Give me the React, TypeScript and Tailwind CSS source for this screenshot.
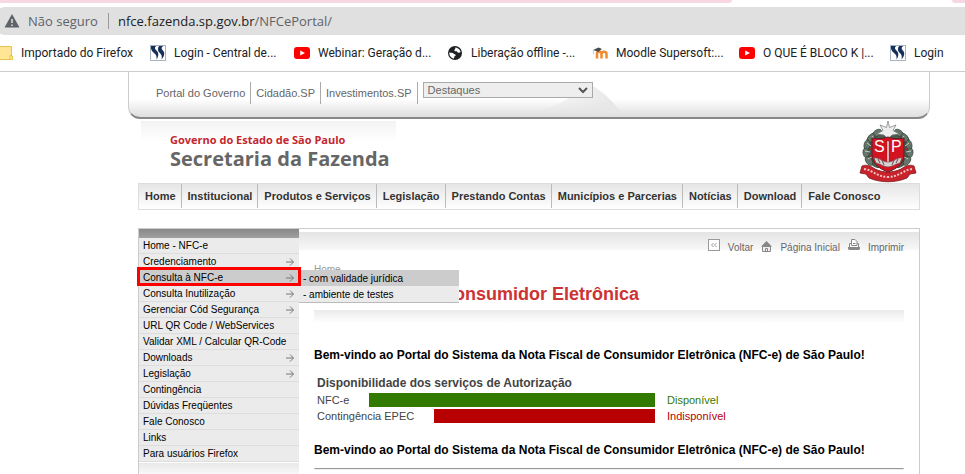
import type { ReactNode } from 'react';

type Bookmark = { label: string; icon: ReactNode; width: string };
type MenuItem = { label: string; submenu?: boolean; active?: boolean };

const MENU: MenuItem[] = [
  { label: 'Home - NFC-e' },
  { label: 'Credenciamento', submenu: true },
  { label: 'Consulta à NFC-e', submenu: true, active: true },
  { label: 'Consulta Inutilização', submenu: true },
  { label: 'Gerenciar Cód Segurança', submenu: true },
  { label: 'URL QR Code / WebServices' },
  { label: 'Validar XML / Calcular QR-Code' },
  { label: 'Downloads', submenu: true },
  { label: 'Legislação', submenu: true },
  { label: 'Contingência' },
  { label: 'Dúvidas Freqüentes' },
  { label: 'Fale Conosco' },
  { label: 'Links' },
  { label: 'Para usuários Firefox' },
];

const NAV = [
  'Home',
  'Institucional',
  'Produtos e Serviços',
  'Legislação',
  'Prestando Contas',
  'Municípios e Parcerias',
  'Notícias',
  'Download',
  'Fale Conosco',
];

const SERVICES = [
  { name: 'NFC-e', status: 'Disponível', bar: 'bg-[#337a00]', text: 'text-[#337a00]' },
  { name: 'Contingência EPEC', status: 'Indisponível', bar: 'bg-[#b80000]', text: 'text-[#b80000]' },
];

const WELCOME = 'Bem-vindo ao Portal do Sistema da Nota Fiscal de Consumidor Eletrônica (NFC-e) de São Paulo!';

function FolderIcon() {
  return (
    <svg width="16" height="16" viewBox="0 0 16 16">
      <path d="M0 1.500h14.500v9.500h1v3.500H0z" fill="#ffe694" stroke="#e8c34a" />
      <path d="M13 14v-3.500h2" fill="none" stroke="#e8c34a" />
    </svg>
  );
}

function SupersoftIcon() {
  return (
    <svg width="16" height="16" viewBox="0 0 16 16">
      <rect x=".5" y=".5" width="15" height="15" fill="#fff" stroke="#a9b4c2" />
      <path d="M1 1h5.500C4.500 2 4.500 3.500 6 5c2.500 2.300 3.500 5 .5 9.500.5-3.500-.5-5-2.500-6.500C1.500 6.200.5 3.500 1 1z" fill="#16305a" />
      <path d="M9 1h4.500c-2 1-2.500 2.500-1 4 2.500 2.300 2.500 5.500-1 9.500.8-3.500 0-5-1.700-6.500C7.500 6 7.500 3.500 9 1z" fill="#16305a" />
    </svg>
  );
}

function YoutubeIcon() {
  return (
    <svg width="16" height="16" viewBox="0 0 16 16">
      <rect y="2" width="16" height="12" rx="3" fill="#f00" />
      <path d="M6.200 5.500 11 8l-4.800 2.500z" fill="#fff" />
    </svg>
  );
}

function GlobeIcon() {
  return (
    <svg width="16" height="16" viewBox="0 0 16 16">
      <circle cx="8" cy="8" r="7" fill="#202124" />
      <path d="M8.500 2.500c2.500.2 4.600 2 5.100 4.500-1 .6-1.400 1-2.600.7-.8-.3-.5-1.200-1.500-1.400-1-.1-1.900.1-2.100-.8-.2-1 .8-1 .9-1.700.1-.6-.3-.7.200-1.300z" fill="#fff" />
      <path d="M2.300 7.500c1 .3 3.700 0 4.200 1 .4.900 2.200.4 2.200 1.400 0 1.200-1.400 1-1.500 2.100-.1.700.2 1-.4 1.500-2.700-.5-4.700-2.800-4.500-6z" fill="#fff" />
    </svg>
  );
}

function MoodleIcon() {
  return (
    <svg width="16" height="16" viewBox="0 0 16 16">
      <path d="M5 13.500V9c0-3 4.500-3 4.500 0v4.500M9.500 9c0-3 5-3 5 0v4.500" fill="none" stroke="#f28a2e" strokeWidth="2.500" />
      <path d="M1 5 6.500 2.500 10 4 6 7 4 6z" fill="#4a4a4a" />
      <path d="M1.500 5v4" stroke="#dcc8b8" />
    </svg>
  );
}

function MenuArrow() {
  return (
    <svg width="8" height="8" viewBox="0 0 8 8" fill="none" stroke="#777">
      <path d="M0 4h7.500M4 .5 7.500 4 4 7.500" />
    </svg>
  );
}

function BackIcon() {
  return (
    <svg width="12" height="12" viewBox="0 0 12 12" fill="none" stroke="#999">
      <rect x=".5" y=".5" width="11" height="11" fill="#fff" />
      <path d="M5.500 4l-2 2 2 2M8.500 4l-2 2 2 2" />
    </svg>
  );
}

function HouseIcon() {
  return (
    <svg width="11" height="11" viewBox="0 0 11 11">
      <path d="M5.500 0 11 5.500H0z" fill="#888" />
      <path d="M1.500 5.500h8v5h-8z" fill="#eee" stroke="#888" />
      <path d="M4.500 10.500V7.500h2v3M3 5.500h5" fill="none" stroke="#888" />
    </svg>
  );
}

function PrinterIcon() {
  return (
    <svg width="12" height="12" viewBox="0 0 12 12">
      <path d="M1.500 4.500h9v4h-9z" fill="#fff" stroke="#888" />
      <path d="M3.500 6.500v-6h3.500l2 2v4z" fill="#fff" stroke="#888" />
      <path d="M5 4.500h2.500" stroke="#888" />
      <path d="M0 8h12v2l-1 1H1L0 10z" fill="#888" />
    </svg>
  );
}

function CoatOfArms() {
  return (
    <svg width="58" height="62" viewBox="0 0 58 62" role="img" aria-label="Brasão de São Paulo">
      <path d="M20 10C10 11 5 20 6 29c0 9 4 15 12 18h22c8-3 12-9 12-18 1-9-4-18-14-19z" fill="#4b5c50" />
      <g fill="#66766a" stroke="#29382e" strokeWidth=".6">
        <ellipse cx="18" cy="12" rx="5" ry="3" transform="rotate(-35 18 12)" />
        <ellipse cx="12" cy="17" rx="5" ry="3" transform="rotate(-55 12 17)" />
        <ellipse cx="8" cy="24" rx="5" ry="3" transform="rotate(-80 8 24)" />
        <ellipse cx="7" cy="32" rx="5" ry="3" transform="rotate(80 7 32)" />
        <ellipse cx="10" cy="40" rx="5" ry="3" transform="rotate(55 10 40)" />
        <ellipse cx="40" cy="12" rx="5" ry="3" transform="rotate(35 40 12)" />
        <ellipse cx="46" cy="17" rx="5" ry="3" transform="rotate(55 46 17)" />
        <ellipse cx="50" cy="24" rx="5" ry="3" transform="rotate(80 50 24)" />
        <ellipse cx="51" cy="32" rx="5" ry="3" transform="rotate(-80 51 32)" />
        <ellipse cx="48" cy="40" rx="5" ry="3" transform="rotate(-55 48 40)" />
      </g>
      <path d="M8 22l4 3M6 30l5 1M9 38l4-2M13 15l3 4M50 22l-4 3M52 30l-5 1M49 38l-4-2M45 15l-3 4" stroke="#c3ccc5" />
      <g fill="#b3202a">
        <circle cx="11" cy="28" r="1" />
        <circle cx="12" cy="35" r="1" />
        <circle cx="47" cy="28" r="1" />
        <circle cx="46" cy="35" r="1" />
      </g>
      <path d="m29 0 1.500 6.500L37 4l-3 5.500 6 3.500-7 1-4 4-4-4-7-1 6-3.500L21 4l6.500 2.500z" fill="#ededed" stroke="#777" strokeWidth=".7" />
      <path d="M13 17c6 1 10 1 16-1 6 2 10 2 16 1v17c0 9-8 14-16 17-8-3-16-8-16-17z" fill="#d3131f" stroke="#59222a" />
      <path d="M28 20h2v24h-2z" fill="#f0dada" stroke="#8e1018" strokeWidth=".4" />
      <path d="M15 37c5-1 8 4 14 4s9-5 14-4l-2 5c-5 1-8 4-12 4s-7-3-12-4z" fill="#d8d2d2" stroke="#6b4a4c" strokeWidth=".7" />
      <path d="m19 38 2 4m2-3 2 5m8 0 2-5m2 3 2-4" stroke="#6b4a4c" />
      <text x="15" y="31" fontFamily="Liberation Sans, sans-serif" fontSize="16" fill="#fff">S</text>
      <text x="32" y="31" fontFamily="Liberation Sans, sans-serif" fontSize="16" fill="#fff">P</text>
      <path d="M3 45c4-2 9 0 13 3 8 4 18 4 26 0 4-3 9-5 13-3l2 7-6 1-3 4c-12 5-26 5-38 0l-3-4-6-1z" fill="#c9222b" stroke="#7a1a20" strokeWidth=".8" />
      <path d="M5 48c9 1 13 8 24 8s15-7 24-8" fill="none" stroke="#edc4c4" strokeWidth="2" strokeDasharray="2 1.500" />
    </svg>
  );
}

const BOOKMARKS: Bookmark[] = [
  { label: 'Importado do Firefox', icon: <FolderIcon />, width: 'w-[153px]' },
  { label: 'Login - Central de...', icon: <SupersoftIcon />, width: 'w-36' },
  { label: 'Webinar: Geração d...', icon: <YoutubeIcon />, width: 'w-[153px]' },
  { label: 'Liberação offline -...', icon: <GlobeIcon />, width: 'w-[145px]' },
  { label: 'Moodle Supersoft:...', icon: <MoodleIcon />, width: 'w-[147px]' },
  { label: 'O QUE É BLOCO K |...', icon: <YoutubeIcon />, width: 'w-[151px]' },
  { label: 'Login', icon: <SupersoftIcon />, width: 'w-20' },
];

function BrowserChrome() {
  return (
    <header>
      <div className="flex h-[3px] justify-between">
        <div className="w-[732px] rounded-br-lg bg-[#f8d7e5]" />
        <div className="w-[13px] rounded-bl-lg bg-[#f8d7e5]" />
      </div>
      <div className="-ml-2 mt-1 flex h-7 items-center rounded-l-full bg-[#e0e0e0] pl-3 font-['Open_Sans',sans-serif] text-[13px] text-[#5f6368]">
        <svg width="16" height="14" viewBox="0 0 16 14">
          <path d="M8 0l7.500 13.500H.5z" fill="#5f6368" />
          <path d="M8 5v4M8 10.500V12" stroke="#e0e0e0" strokeWidth="1.500" />
        </svg>
        <span className="ml-2 w-20 pt-px">Não seguro</span>
        <span className="mr-[9px] h-4 w-px bg-[#9a9a9a]" />
        <span className="pt-px">
          <span className="text-[#202124]">nfce.fazenda.sp.gov.br</span>/NFCePortal/
        </span>
      </div>
      <nav className="-ml-[3px] flex h-[37px] items-center overflow-hidden border-b border-[#ccc] font-[Roboto,sans-serif] text-[12px] text-[#202124]">
        {BOOKMARKS.map((b, i) => (
          <a key={i} href="#" className={`flex shrink-0 items-center gap-2 whitespace-nowrap ${b.width}`}>
            <span className="shrink-0">{b.icon}</span>
            {b.label}
          </a>
        ))}
      </nav>
    </header>
  );
}

function GovernmentBar() {
  return (
    <div className="relative h-[47px] overflow-hidden rounded-b-xl border-x border-b-2 border-x-[#ccc] border-b-[#888] bg-linear-to-b from-white from-60% to-[#dedede]">
      <svg className="absolute left-[390px] top-2 h-[34px] w-[105px]" viewBox="0 0 105 34">
        <defs>
          <linearGradient id="swoosh">
            <stop offset="0" stopColor="#e4e4e4" stopOpacity="0" />
            <stop offset="1" stopColor="#e6e6e6" />
          </linearGradient>
        </defs>
        <path d="M0 34C40 30 55 14 68 3Q88 12 103 34z" fill="url(#swoosh)" />
      </svg>
      <div className="relative flex items-start pl-[22px] pt-[10px] text-[11px] text-[#666]">
        {['Portal do Governo', 'Cidadão.SP', 'Investimentos.SP'].map((label) => (
          <a key={label} href="#" className="border-r border-[#aaa] px-[5px] leading-[22px]">
            {label}
          </a>
        ))}
        <select
          aria-label="Destaques"
          className="ml-[5px] h-4 w-[170px] appearance-none border border-[#aaa] bg-[#eee] px-1 text-[11px] leading-[14px] text-[#666]"
        >
          <option>Destaques</option>
        </select>
        <svg className="pointer-events-none -ml-[15px] mt-1 h-2 w-[10px]" viewBox="0 0 10 8" fill="none" stroke="#555" strokeWidth="2">
          <path d="m1 2 4 4 4-4" />
        </svg>
      </div>
    </div>
  );
}

function Brand() {
  return (
    <div className="ml-[13px] mr-[13px] mt-0.5 flex h-16 justify-between">
      <div className="h-5 w-[255px] bg-linear-to-b from-[#f3f3f3] to-white pl-[29px] pt-3 font-['Open_Sans',sans-serif] font-bold">
        <p className="whitespace-nowrap text-[11px] leading-[14px] text-[#c4262e]">Governo do Estado de São Paulo</p>
        <p className="whitespace-nowrap text-[20px] leading-6 text-[#666]">Secretaria da Fazenda</p>
      </div>
      <CoatOfArms />
    </div>
  );
}

function MainNav() {
  return (
    <nav className="mx-[10px] -mt-0.5 flex h-[27px] items-start border border-[#ddd] bg-linear-to-b from-[#e6e6e6] to-white text-[11px] font-bold text-[#333]">
      {NAV.map((label) => (
        <a key={label} href="#" className="border-r border-[#bbb] pl-[6px] pr-[5px] leading-6 whitespace-nowrap last:border-r-0">
          {label}
        </a>
      ))}
    </nav>
  );
}

function SideMenu() {
  return (
    <aside className="flex w-40 shrink-0 flex-col text-[10px] text-black">
      <div className="h-[9px] bg-linear-to-b from-[#888] to-[#a0a0a0]" />
      <ul className="border-b border-white">
        {MENU.map((item) => (
          <li key={item.label} className="relative">
            <a
              href="#"
              className={`flex h-4 items-center justify-between border-b border-[#ddd] pl-1 pr-[5px] whitespace-nowrap ${
                item.active ? 'bg-[#ccc]' : 'bg-[#ebebeb]'
              }`}
            >
              {item.label}
              {item.submenu && <MenuArrow />}
            </a>
            {item.active && (
              <>
                <span className="pointer-events-none absolute -inset-x-0.5 -top-[3px] bottom-0 z-20 border-[3px] border-[#f00]" />
                <ul className="absolute left-full top-0 z-10 w-40 border-b border-[#bbb] bg-[#ebebeb]">
                  <li>
                    <a href="#" className="flex h-4 items-center bg-[#ccc] pl-1">- com validade jurídica</a>
                  </li>
                  <li>
                    <a href="#" className="flex h-4 items-center pl-1">- ambiente de testes</a>
                  </li>
                </ul>
              </>
            )}
          </li>
        ))}
      </ul>
      <div className="flex-1 bg-linear-to-b from-[#e8e8e8] to-[#f8f8f8]" />
    </aside>
  );
}

function PageTools() {
  return (
    <div className="mt-[3px] flex h-[18px] justify-end bg-linear-to-b from-[#e4e4e4] to-[#f8f8f8] pr-[15px] pt-[7px] text-[10px] leading-[18px] text-[#666]">
      <a href="#" className="flex gap-2">
        <BackIcon />
        Voltar
      </a>
      <a href="#" className="ml-2 flex gap-2">
        <span className="mt-0.5"><HouseIcon /></span>
        Página Inicial
      </a>
      <a href="#" className="ml-2 flex gap-2">
        <PrinterIcon />
        Imprimir
      </a>
    </div>
  );
}

function Content() {
  return (
    <main className="min-w-0 flex-1">
      <PageTools />
      <div className="mx-[15px]">
        <p className="mt-3 text-[10px] leading-4 text-[#999]">Home</p>
        <h1 className="mt-1 text-[18px] font-bold leading-6 text-[#c33]">Nota Fiscal de Consumidor Eletrônica</h1>
        <div className="mt-1 h-[13px] bg-linear-to-b from-[#ebebeb] to-white" />
        <p className="mt-6 whitespace-nowrap text-[12px] font-bold leading-4 text-black">{WELCOME}</p>
        <section className="ml-[3px] mt-3 text-[11px] text-[#444]">
          <h2 className="text-[12px] font-bold leading-[17px]">Disponibilidade dos serviços de Autorização</h2>
          {SERVICES.map((s) => (
            <div key={s.name} className="flex h-4 items-center">
              <div className="flex w-[338px] items-center gap-5">
                <span>{s.name}</span>
                <span className={`h-[14px] flex-1 ${s.bar}`} />
              </div>
              <span className={`ml-3 ${s.text}`}>{s.status}</span>
            </div>
          ))}
        </section>
        <p className="mt-[18px] whitespace-nowrap text-[12px] font-bold leading-4 text-black">{WELCOME}</p>
        <hr className="mt-[10px] border border-[#eee] border-t-[#999]" />
      </div>
    </main>
  );
}

export default function App() {
  return (
    <div className="flex min-h-screen flex-col overflow-hidden bg-white">
      <BrowserChrome />
      <div className="ml-32 mr-[35px] flex flex-1 flex-col font-['Liberation_Sans',Arial,sans-serif]">
        <GovernmentBar />
        <Brand />
        <MainNav />
        <div className="mx-[10px] mt-[18px] flex flex-1 border-x border-t border-[#ccc]">
          <SideMenu />
          <Content />
        </div>
      </div>
    </div>
  );
}
